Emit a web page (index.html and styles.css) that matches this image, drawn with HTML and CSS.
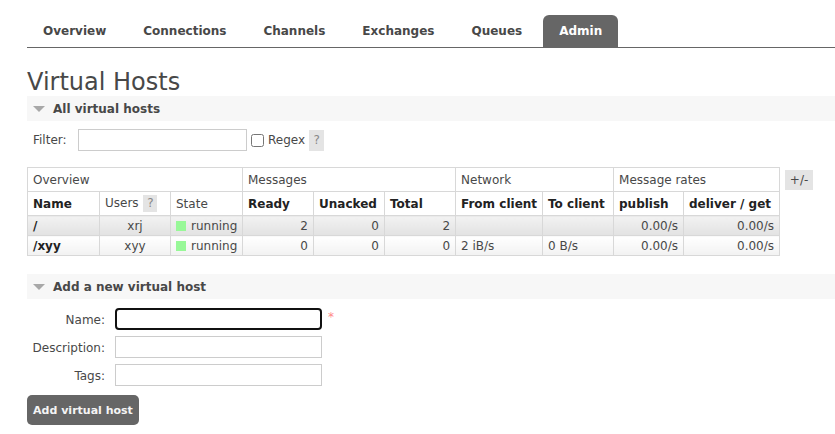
FILE: index.html
```html
<!DOCTYPE html>
<html>
<head>
<meta charset="utf-8">
<link rel="stylesheet" href="styles.css">
</head>
<body>
<div class="page">
  <ul class="tabs">
    <li class="tab">Overview</li>
    <li class="tab">Connections</li>
    <li class="tab">Channels</li>
    <li class="tab">Exchanges</li>
    <li class="tab">Queues</li>
    <li class="tab active">Admin</li>
  </ul>

  <h1 class="title">Virtual Hosts</h1>

  <div class="section-bar"><span class="tri"></span><span class="section-title">All virtual hosts</span></div>

  <div class="filter-row">
    <label class="filter-label">Filter:</label>
    <input class="filter-input" type="text">
    <input class="regex-check" type="checkbox">
    <span class="regex-label">Regex</span>
    <span class="help help-filter">?</span>
  </div>

  <div class="table-row">
    <table class="vhosts">
      <colgroup>
        <col class="c72"><col class="c71"><col class="c72"><col class="c71"><col class="c71"><col class="c71"><col class="c87"><col class="c71"><col class="c70"><col class="c96">
      </colgroup>
      <thead>
        <tr class="group-row">
          <th colspan="3">Overview</th>
          <th colspan="3">Messages</th>
          <th colspan="2">Network</th>
          <th colspan="2">Message rates</th>
        </tr>
        <tr class="head-row">
          <th class="b">Name</th>
          <th>Users <span class="help help-users">?</span></th>
          <th>State</th>
          <th class="b">Ready</th>
          <th class="b">Unacked</th>
          <th class="b">Total</th>
          <th class="b">From client</th>
          <th class="b">To client</th>
          <th class="b">publish</th>
          <th class="b">deliver / get</th>
        </tr>
      </thead>
      <tbody>
        <tr class="alt1">
          <td class="name">/</td>
          <td class="c">xrj</td>
          <td><span class="status"></span>running</td>
          <td class="r">2</td>
          <td class="r">0</td>
          <td class="r">2</td>
          <td></td>
          <td></td>
          <td class="r">0.00/s</td>
          <td class="r">0.00/s</td>
        </tr>
        <tr class="alt2">
          <td class="name">/xyy</td>
          <td class="c">xyy</td>
          <td><span class="status"></span>running</td>
          <td class="r">0</td>
          <td class="r">0</td>
          <td class="r">0</td>
          <td>2 iB/s</td>
          <td>0 B/s</td>
          <td class="r">0.00/s</td>
          <td class="r">0.00/s</td>
        </tr>
      </tbody>
    </table>
    <span class="plusminus">+/-</span>
  </div>

  <div class="section-bar second"><span class="tri"></span><span class="section-title">Add a new virtual host</span></div>

  <div class="form">
    <label class="form-label">Name:</label>
    <input class="form-input focused" type="text">
    <span class="req">*</span>
    <label class="form-label">Description:</label>
    <input class="form-input" type="text">
    <span></span>
    <label class="form-label">Tags:</label>
    <input class="form-input" type="text">
    <span></span>
  </div>

  <button class="add-btn">Add virtual host</button>
</div>
</body>
</html>
```

FILE: styles.css
```css
* { box-sizing: border-box; }

body {
  margin: 0;
  font-family: "DejaVu Sans", Verdana, sans-serif;
  font-size: 12px;
  color: #484848;
  background: #fff;
}

.page {
  padding: 15px 0 0 27px;
}

.tabs {
  list-style: none;
  margin: 0;
  padding: 0;
  display: flex;
  gap: 5px;
  border-bottom: 1px solid #666;
}

.tab {
  padding: 1px 16px 0 16px;
  height: 32px;
  line-height: 31px;
  font-weight: bold;
  color: #484848;
}

.tab.active {
  background: #666;
  color: #fff;
  border-radius: 6px 6px 0 0;
}

.title {
  margin: 20px 0 0 0;
  font-size: 24px;
  line-height: 28px;
  font-weight: normal;
  color: #484848;
}

.section-bar {
  display: flex;
  align-items: center;
  height: 25px;
  background: #f7f7f7;
}

.section-bar.second {
  margin-top: 18px;
}

.tri {
  width: 0;
  height: 0;
  margin-left: 6px;
  margin-right: 8px;
  border-left: 6px solid transparent;
  border-right: 6px solid transparent;
  border-top: 6px solid #a8a8a8;
}

.section-title {
  font-weight: bold;
  color: #484848;
}

.filter-row {
  display: flex;
  align-items: center;
  margin-top: 8px;
  height: 22px;
}

.filter-label {
  margin-left: 6px;
  width: 45px;
}

.filter-input {
  width: 169px;
  height: 22px;
  border: 1px solid #ccc;
  margin: 0;
  padding: 2px;
}

.regex-check {
  width: 13px;
  height: 13px;
  margin: 0 4px 0 4px;
}

.regex-label {
  margin-right: 4px;
}

.help {
  display: inline-block;
  background: #e4e4e4;
  color: #888;
  text-align: center;
}

.help-filter {
  width: 15px;
  height: 21px;
  line-height: 21px;
}

.help-users {
  width: 14px;
  height: 17px;
  line-height: 17px;
  margin-left: 1px;
  font-weight: normal;
}

.table-row {
  display: flex;
  align-items: flex-start;
  gap: 5px;
  margin-top: 16px;
}

.vhosts {
  border-collapse: collapse;
  table-layout: fixed;
  width: 753px;
}

.c72 { width: 72px; }
.c71 { width: 71px; }
.c70 { width: 70px; }
.c87 { width: 87px; }
.c96 { width: 96px; }

.vhosts th,
.vhosts td {
  border: 1px solid #d8d8d8;
  padding: 0 5px;
  text-align: left;
  white-space: nowrap;
  overflow: hidden;
}

.group-row th {
  height: 24px;
  font-weight: normal;
  color: #484848;
}

.head-row th {
  height: 24px;
  font-weight: normal;
  color: #484848;
}

.head-row th.b {
  font-weight: bold;
  color: #222;
}

.vhosts td {
  height: 20px;
  color: #484848;
}

.alt1 td {
  background: linear-gradient(#f2f2f2, #e2e2e2);
}

.alt2 td {
  background: linear-gradient(#ffffff, #f2f2f2);
}

.vhosts td.name {
  font-weight: bold;
  color: #222;
}

.vhosts td.c { text-align: center; }
.vhosts td.r { text-align: right; }

.status {
  display: inline-block;
  width: 10px;
  height: 10px;
  background: #98f898;
  margin-right: 5px;
  vertical-align: -1px;
}

.plusminus {
  margin-top: 3px;
  width: 28px;
  height: 20px;
  line-height: 20px;
  text-align: center;
  background: #e4e4e4;
  color: #484848;
}

.form {
  display: grid;
  grid-template-columns: 78px 207px auto;
  column-gap: 10px;
  row-gap: 6px;
  margin-top: 9px;
  align-items: center;
}

.form-label {
  text-align: right;
  padding-top: 2px;
}

.form-input {
  width: 207px;
  height: 22px;
  border: 1px solid #ccc;
  margin: 0;
  padding: 2px;
}

.form-input.focused {
  border: 2px solid #111;
  border-radius: 4px;
}

.req {
  color: #f88;
  align-self: start;
  margin-left: -4px;
  margin-top: 2px;
}

.add-btn {
  margin-top: 9px;
  width: 112px;
  height: 30px;
  background: #666;
  color: #f4f4f4;
  border: none;
  border-radius: 5px;
  font-family: "DejaVu Sans", Verdana, sans-serif;
  font-size: 11px;
  font-weight: bold;
  padding: 0;
}
```
